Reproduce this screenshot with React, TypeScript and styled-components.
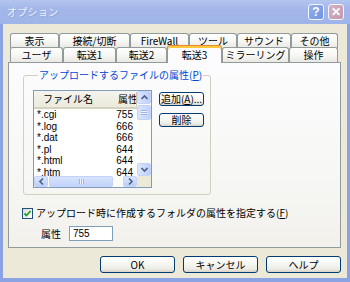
import React from 'react';
import styled, { createGlobalStyle } from 'styled-components';

const Global = createGlobalStyle`
  html, body { margin: 0; padding: 0; width: 350px; height: 282px; overflow: hidden; background: #ece9d8; }
  * { box-sizing: border-box; }
  body { font-family: "Noto Sans CJK JP", "Liberation Sans", sans-serif; font-size: 10px; color: #000; }
`;

const Window = styled.div`
  width: 350px;
  height: 282px;
  display: flex;
  flex-direction: column;
`;

const TitleBar = styled.div`
  height: 24px;
  flex: none;
  display: flex;
  align-items: center;
  padding: 0 6px 0 7px;
  background: linear-gradient(to bottom, #b3c5ef 0%, #a2b6e9 40%, #9fb4e8 100%);
`;

const Title = styled.div`
  flex: 1;
  font-size: 10px;
  line-height: 12px;
  color: #eef3fd;
  text-shadow: 1px 1px 0 #8fa3d6;
  letter-spacing: 0.3px;
`;

const CapButton = styled.div<{ $kind: 'help' | 'close' }>`
  width: 16px;
  height: 16px;
  margin-left: ${(p) => (p.$kind === 'close' ? '4px' : '0')};
  border: 1px solid #f4f6fc;
  border-radius: 3px;
  display: flex;
  align-items: center;
  justify-content: center;
  background: ${(p) =>
    p.$kind === 'close'
      ? 'linear-gradient(135deg, #d6b3c6, #c198b0)'
      : 'linear-gradient(135deg, #95b0ee, #7093e0)'};
  color: #fff;
  font-family: "Liberation Sans", sans-serif;
  font-weight: bold;
  font-size: 12px;
  line-height: 12px;
`;

const Body = styled.div`
  flex: 1;
  display: flex;
  flex-direction: column;
  background: #ece9d8;
  border-left: 3px solid #8ba3e3;
  border-right: 3px solid #8ba3e3;
  border-bottom: 4px solid #8ba3e3;
  padding: 9px 6px 0 5px;
`;

const TabRows = styled.div`
  display: flex;
  flex-direction: column;
  padding-left: 2px;
`;

const TabRow = styled.div<{ $front?: boolean }>`
  display: flex;
  align-items: flex-end;
  height: 15px;
  margin-top: ${(p) => (p.$front ? '-1px' : '0')};
  position: relative;
  z-index: ${(p) => (p.$front ? 2 : 1)};
`;

const Tab = styled.div<{ $w: number; $sel?: boolean }>`
  flex: none;
  width: ${(p) => p.$w}px;
  height: ${(p) => (p.$sel ? 18 : 15)}px;
  margin-bottom: ${(p) => (p.$sel ? '-1px' : '0')};
  position: relative;
  z-index: ${(p) => (p.$sel ? 3 : 1)};
  border: 1px solid #919b9c;
  border-bottom: none;
  border-top-color: ${(p) => (p.$sel ? '#e68b2c' : '#919b9c')};
  border-radius: 3px 3px 0 0;
  background: ${(p) =>
    p.$sel ? '#fcfcfe' : 'linear-gradient(to bottom, #ffffff 0%, #f7f7f4 50%, #e9e8e2 100%)'};
  box-shadow: ${(p) => (p.$sel ? 'inset 0 2px 0 #ffc83c' : 'none')};
  text-align: center;
  font-size: 10px;
  line-height: ${(p) => (p.$sel ? 17 : 14)}px;
  white-space: nowrap;
  overflow: hidden;
  font-family: "Noto Sans CJK JP", "Liberation Sans", sans-serif;
`;

const Panel = styled.div`
  height: 186px;
  flex: none;
  border: 1px solid #919b9c;
  background: linear-gradient(to bottom, #fcfcfe 0%, #f7f7f5 60%, #f2f1ec 100%);
  padding: 6px 0 0 14px;
  display: flex;
  flex-direction: column;
`;

const Group = styled.fieldset`
  margin: 0;
  width: 188px;
  height: 126px;
  border: 1px solid #d0d0bf;
  border-radius: 3px;
  padding: 9px 6px 0 9px;
  display: flex;
  gap: 7px;
  align-items: flex-start;
`;

const Legend = styled.legend`
  padding: 0 1px;
  margin-left: 5px;
  color: #0046d5;
  font-size: 10px;
  line-height: 12px;
`;

const List = styled.div`
  width: 119px;
  height: 98px;
  border: 1px solid #7f9db9;
  background: #fff;
  display: grid;
  grid-template-columns: 103px 14px;
  grid-template-rows: 1fr 11px;
`;

const ListContent = styled.div`
  overflow: hidden;
  display: flex;
  flex-direction: column;
`;

const Header = styled.div`
  height: 18px;
  flex: none;
  display: grid;
  grid-template-columns: 76px 27px;
  background: linear-gradient(to bottom, #f4f3ee 0%, #ebeadb 100%);
  border-bottom: 2px solid #d6d2c2;
  padding-top: 1px;
`;

const HeadCell = styled.div<{ $divider?: boolean }>`
  padding-left: ${(p) => (p.$divider ? 8 : 9)}px;
  height: 14px;
  line-height: 14px;
  font-size: 10px;
  white-space: nowrap;
  overflow: hidden;
  border-right: ${(p) => (p.$divider ? '1px solid #c7c5b2' : 'none')};
  box-shadow: ${(p) => (p.$divider ? 'inset -1px 0 0 #fff' : 'none')};
`;

const Row = styled.div`
  height: 11.5px;
  flex: none;
  display: grid;
  grid-template-columns: 76px 23px;
  font-family: "Liberation Sans", "Noto Sans CJK JP", sans-serif;
  font-size: 10px;
  line-height: 11.5px;
`;

const Name = styled.div`
  padding-left: 3px;
`;

const Value = styled.div`
  text-align: right;
`;

const VScroll = styled.div`
  grid-row: 1;
  grid-column: 2;
  display: flex;
  flex-direction: column;
  background: #fbfbf8;
`;

const HScroll = styled.div`
  grid-row: 2;
  grid-column: 1;
  display: flex;
  background: #fbfbf8;
`;

const Corner = styled.div`
  grid-row: 2;
  grid-column: 2;
  background: #ece9d8;
`;

const Arrow = styled.div<{ $h: boolean }>`
  flex: none;
  width: 14px;
  height: ${(p) => (p.$h ? 11 : 13)}px;
  border: 1px solid #c3d3fd;
  border-radius: 2px;
  background: linear-gradient(${(p) => (p.$h ? 'to bottom' : 'to right')}, #dbe6fe, #bdcff9);
  display: flex;
  align-items: center;
  justify-content: center;
`;

const Track = styled.div<{ $h: boolean }>`
  flex: 1;
  display: flex;
  flex-direction: ${(p) => (p.$h ? 'row' : 'column')};
  padding: ${(p) => (p.$h ? '0 0 0 1px' : '1px 0 0 0')};
`;

const Thumb = styled.div<{ $h: boolean }>`
  flex: none;
  width: ${(p) => (p.$h ? '64px' : '14px')};
  height: ${(p) => (p.$h ? '11px' : '15px')};
  border: 1px solid #c3d3fd;
  border-radius: 2px;
  background: linear-gradient(${(p) => (p.$h ? 'to bottom' : 'to right')}, #d8e3fd, #c2d2fa);
  display: flex;
  align-items: center;
  justify-content: center;
`;

const Grip = styled.div<{ $h: boolean }>`
  width: ${(p) => (p.$h ? '5px' : '6px')};
  height: 5px;
  background: ${(p) =>
    p.$h
      ? 'repeating-linear-gradient(to right, #9fb4e8 0 1px, #eef3fe 1px 2px)'
      : 'repeating-linear-gradient(to bottom, #9fb4e8 0 1px, #eef3fe 1px 2px)'};
`;

const SideButtons = styled.div`
  display: flex;
  flex-direction: column;
  gap: 7px;
  margin-top: 2px;
`;

const Button = styled.div<{ $w: number; $h: number }>`
  width: ${(p) => p.$w}px;
  height: ${(p) => p.$h}px;
  border: 1px solid #003c74;
  border-radius: 3px;
  background: linear-gradient(to bottom, #ffffff 0%, #f5f5f1 50%, #ecebe5 80%, #d8d3c8 100%);
  display: flex;
  align-items: center;
  justify-content: center;
  font-size: 10px;
  line-height: 12px;
  white-space: nowrap;
  u { text-decoration: underline; }
`;

const CheckRow = styled.div`
  display: flex;
  align-items: center;
  gap: 3px;
  margin: 12px 0 0 -1px;
  height: 12px;
  line-height: 12px;
  font-size: 10px;
  white-space: nowrap;
`;

const CheckBox = styled.div`
  width: 11px;
  height: 11px;
  border: 1px solid #1c5180;
  background: linear-gradient(135deg, #dcdcd7, #ffffff);
  display: flex;
  align-items: center;
  justify-content: center;
`;

const AttrRow = styled.div`
  display: flex;
  align-items: center;
  gap: 8px;
  margin: 7px 0 0 18px;
  font-size: 10px;
`;

const Input = styled.div`
  width: 44px;
  height: 15px;
  border: 1px solid #7f9db9;
  background: #fff;
  padding-left: 3px;
  line-height: 13px;
  font-family: "Liberation Sans", sans-serif;
  font-size: 10px;
`;

const Footer = styled.div`
  display: flex;
  justify-content: flex-end;
  gap: 8px;
  margin-top: 8px;
`;

const Chevron = ({ dir }: { dir: 'up' | 'down' | 'left' | 'right' }) => {
  const paths: Record<string, string> = {
    up: 'M1.5 6 L4.5 3 L7.5 6',
    down: 'M1.5 3 L4.5 6 L7.5 3',
    left: 'M6 1.5 L3 4.5 L6 7.5',
    right: 'M3 1.5 L6 4.5 L3 7.5',
  };
  return (
    <svg width="9" height="9" viewBox="0 0 9 9">
      <path d={paths[dir]} fill="none" stroke="#4d6185" strokeWidth="1.7" />
    </svg>
  );
};

const row1: [string, number][] = [
  ['表示', 49],
  ['接続/切断', 71],
  ['FireWall', 59],
  ['ツール', 48],
  ['サウンド', 54],
  ['その他', 47],
];
const row2: [string, number, boolean?][] = [
  ['ユーザ', 53],
  ['転送1', 53],
  ['転送2', 51],
  ['転送3', 55, true],
  ['ミラーリング', 67],
  ['操作', 49],
];

const files: [string, string][] = [
  ['*.cgi', '755'],
  ['*.log', '666'],
  ['*.dat', '666'],
  ['*.pl', '644'],
  ['*.html', '644'],
  ['*.htm', '644'],
];

export default function App() {
  return (
    <>
      <Global />
      <Window>
        <TitleBar>
          <Title>オプション</Title>
          <CapButton $kind="help">?</CapButton>
          <CapButton $kind="close">✕</CapButton>
        </TitleBar>
        <Body>
          <TabRows>
            <TabRow>
              {row1.map(([t, w]) => (
                <Tab key={t} $w={w}>{t}</Tab>
              ))}
            </TabRow>
            <TabRow $front>
              {row2.map(([t, w, s]) => (
                <Tab key={t} $w={w} $sel={!!s}>{t}</Tab>
              ))}
            </TabRow>
          </TabRows>
          <Panel>
            <Group>
              <Legend>
                アップロードするファイルの属性(<u>P</u>)
              </Legend>
              <List>
                <ListContent>
                  <Header>
                    <HeadCell $divider={false}>ファイル名</HeadCell>
                    <HeadCell $divider>属性</HeadCell>
                  </Header>
                  {files.map(([n, v]) => (
                    <Row key={n}>
                      <Name>{n}</Name>
                      <Value>{v}</Value>
                    </Row>
                  ))}
                </ListContent>
                <VScroll>
                  <Arrow $h={false}><Chevron dir="up" /></Arrow>
                  <Track $h={false}>
                    <Thumb $h={false}><Grip $h={false} /></Thumb>
                  </Track>
                  <Arrow $h={false}><Chevron dir="down" /></Arrow>
                </VScroll>
                <HScroll>
                  <Arrow $h><Chevron dir="left" /></Arrow>
                  <Track $h>
                    <Thumb $h><Grip $h /></Thumb>
                  </Track>
                  <Arrow $h><Chevron dir="right" /></Arrow>
                </HScroll>
                <Corner />
              </List>
              <SideButtons>
                <Button $w={45} $h={14}>追加(<u>A</u>)...</Button>
                <Button $w={45} $h={14}>削除</Button>
              </SideButtons>
            </Group>
            <CheckRow>
              <CheckBox>
                <svg width="9" height="9" viewBox="0 0 9 9">
                  <path d="M1.5 4.5 L3.5 6.5 L7.5 2" fill="none" stroke="#21a121" strokeWidth="1.8" />
                </svg>
              </CheckBox>
              <span>アップロード時に作成するフォルダの属性を指定する(<u>F</u>)</span>
            </CheckRow>
            <AttrRow>
              <span>属性</span>
              <Input>755</Input>
            </AttrRow>
          </Panel>
          <Footer>
            <Button $w={75} $h={17}>OK</Button>
            <Button $w={75} $h={17}>キャンセル</Button>
            <Button $w={75} $h={17}>ヘルプ</Button>
          </Footer>
        </Body>
      </Window>
    </>
  );
}
